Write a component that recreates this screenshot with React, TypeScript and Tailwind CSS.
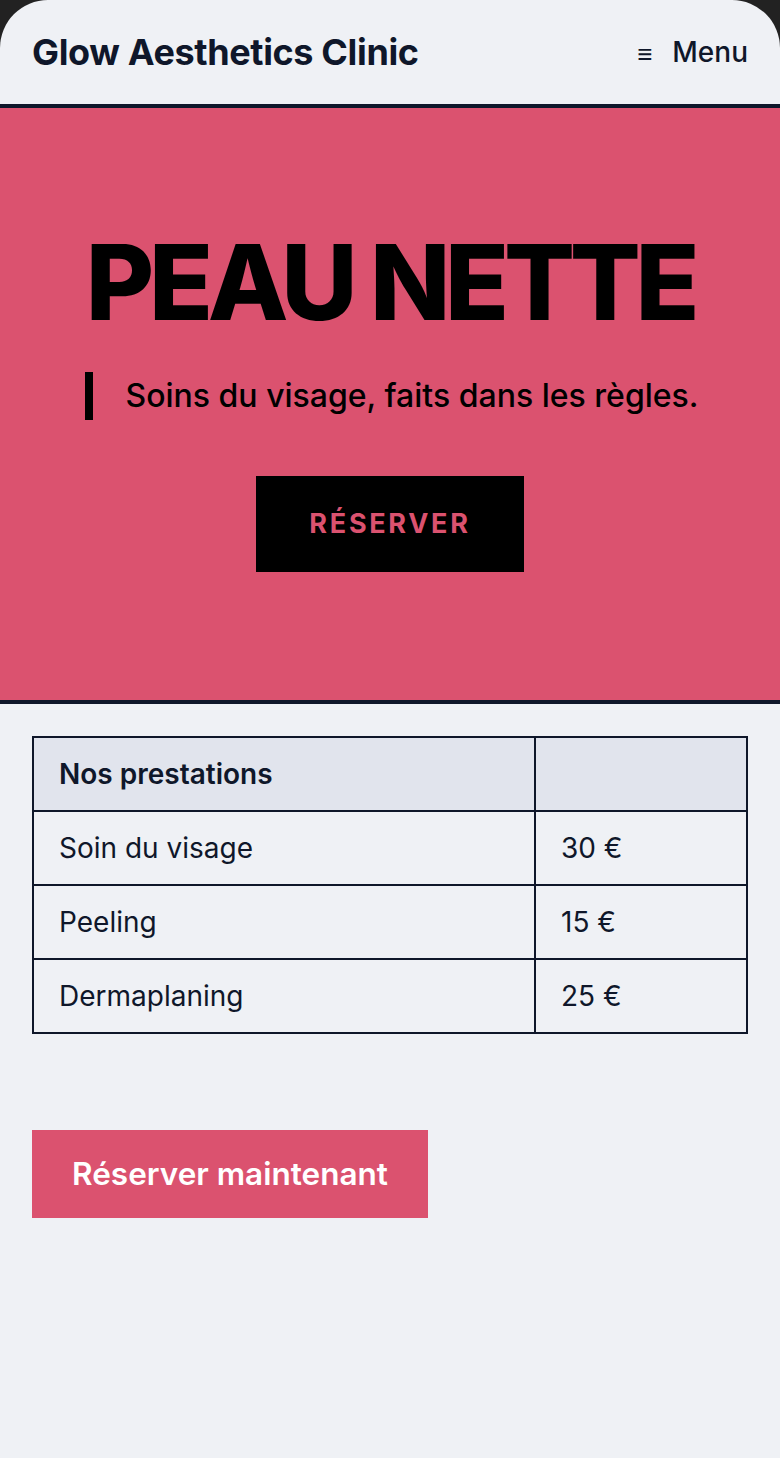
import React from 'react';

const services = [
  { name: 'Soin du visage', price: '30 €' },
  { name: 'Peeling', price: '15 €' },
  { name: 'Dermaplaning', price: '25 €' },
];

export default function App() {
  return (
    <div className="bg-[#222222] min-h-[1458px]" style={{ fontFamily: 'Inter, "Noto Sans", sans-serif' }}>
      <div className="min-h-[1458px] bg-[#eff1f5] rounded-t-[48px] overflow-hidden text-[#0f172a]">
        <header className="h-[108px] flex items-center justify-between px-8 border-b-4 border-[#0f172a]">
          <span className="text-[36px] font-bold tracking-[-0.01em]">Glow Aesthetics Clinic</span>
          <button className="flex items-center gap-5 text-[28px] font-medium">
            <span className="text-[26px] font-bold leading-none mt-1">≡</span>
            <span>Menu</span>
          </button>
        </header>

        <section className="h-[596px] bg-[#db526f] border-b-4 border-[#0f172a] flex flex-col items-center pt-[121px]">
          <h1 className="text-[105px] font-extrabold leading-none tracking-[-0.05em] text-black">PEAU NETTE</h1>
          <p className="mt-[38px] border-l-[8px] border-black pl-8 ml-1 text-[32px] font-medium text-black leading-[48px]">
            Soins du visage, faits dans les règles.
          </p>
          <button className="mt-[56px] w-[268px] h-[96px] bg-black text-[#db526f] text-[27px] font-bold tracking-[0.1em]">
            RÉSERVER
          </button>
        </section>

        <div className="px-8 pt-8">
          <table className="w-full border-collapse border-2 border-[#0f172a] text-[28px]">
            <thead>
              <tr className="bg-[#e1e4ed] h-[74px]">
                <th className="border-2 border-[#0f172a] text-left font-semibold px-[25px] w-[502px]">Nos prestations</th>
                <th className="border-2 border-[#0f172a]"></th>
              </tr>
            </thead>
            <tbody>
              {services.map((s) => (
                <tr key={s.name} className="h-[74px]">
                  <td className="border-2 border-[#0f172a] px-[25px]">{s.name}</td>
                  <td className="border-2 border-[#0f172a] px-[25px]">{s.price}</td>
                </tr>
              ))}
            </tbody>
          </table>

          <button className="mt-24 w-[396px] h-[88px] bg-[#db526f] text-white text-[31.5px] font-semibold">
            Réserver maintenant
          </button>
        </div>
      </div>
    </div>
  );
}
